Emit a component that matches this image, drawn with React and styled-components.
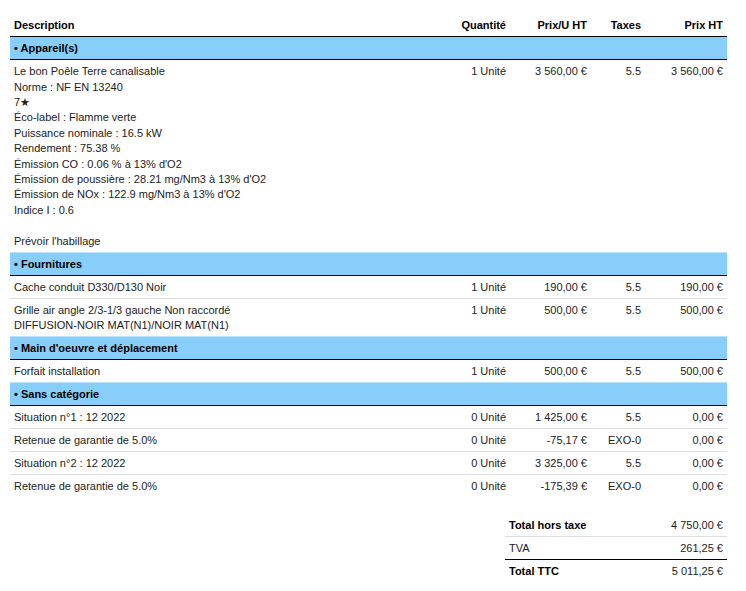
import React from "react";
import styled, { createGlobalStyle } from "styled-components";

const GlobalStyle = createGlobalStyle`
  html, body {
    margin: 0;
    padding: 0;
    background: #fff;
  }
  body {
    font-family: "Liberation Sans", Arial, sans-serif;
    font-size: 11px;
    color: #222;
  }
`;

const Page = styled.div`
  width: 717px;
  padding: 13.5px 0 0 10px;
`;

const Table = styled.table`
  width: 100%;
  border-collapse: collapse;
  table-layout: fixed;
  line-height: 1.4;
`;

const Th = styled.th`
  padding: 4px 4px 3.4px;
  font-weight: bold;
  color: #000;
  text-align: ${(p) => (p.$align === "left" ? "left" : "right")};
  border-bottom: 1px solid #000;
`;

const BandCell = styled.td`
  background: #87cefa;
  padding: 4px 4px 2.6px;
  font-weight: bold;
  color: #000;
  border-top: 1px solid ${(p) => (p.$first ? "#87cefa" : "#b9e2fb")};
  border-bottom: 1px solid #000;
`;

const Row = styled.tr`
  & + & td {
    border-top: 1px solid #ddd;
  }
`;

const Td = styled.td`
  padding: 4px 4px 2.6px;
  vertical-align: top;
  text-align: ${(p) => (p.$align === "left" ? "left" : "right")};
  white-space: ${(p) => (p.$align === "left" ? "normal" : "nowrap")};
`;

const Totals = styled.table`
  width: 222px;
  margin: 16px 0 0 auto;
  border-collapse: collapse;
  line-height: 1.4;
  border-top: 1px solid #000;
`;

const TotalRow = styled.tr`
  td {
    padding: 4px 4px 2.6px;
    font-weight: ${(p) => (p.$bold ? "bold" : "normal")};
    color: ${(p) => (p.$bold ? "#000" : "#222")};
    border-top: 1px solid ${(p) => p.$line || "transparent"};
  }
  td:last-child {
    text-align: right;
    font-weight: normal;
    color: #222;
  }
`;

const sections = [
  {
    title: "Appareil(s)",
    rows: [
      {
        desc: [
          "Le bon Poêle Terre canalisable",
          "Norme : NF EN 13240",
          "7★",
          "Éco-label : Flamme verte",
          "Puissance nominale : 16.5 kW",
          "Rendement : 75.38 %",
          "Émission CO : 0.06 % à 13% d'O2",
          "Émission de poussière : 28.21 mg/Nm3 à 13% d'O2",
          "Émission de NOx : 122.9 mg/Nm3 à 13% d'O2",
          "Indice I : 0.6",
          "",
          "Prévoir l'habillage",
        ],
        qty: "1 Unité",
        pu: "3 560,00 €",
        tax: "5.5",
        total: "3 560,00 €",
      },
    ],
  },
  {
    title: "Fournitures",
    rows: [
      { desc: ["Cache conduit D330/D130 Noir"], qty: "1 Unité", pu: "190,00 €", tax: "5.5", total: "190,00 €" },
      {
        desc: ["Grille air angle 2/3-1/3 gauche Non raccordé", "DIFFUSION-NOIR MAT(N1)/NOIR MAT(N1)"],
        qty: "1 Unité",
        pu: "500,00 €",
        tax: "5.5",
        total: "500,00 €",
      },
    ],
  },
  {
    title: "Main d'oeuvre et déplacement",
    rows: [{ desc: ["Forfait installation"], qty: "1 Unité", pu: "500,00 €", tax: "5.5", total: "500,00 €" }],
  },
  {
    title: "Sans catégorie",
    rows: [
      { desc: ["Situation n°1 : 12 2022"], qty: "0 Unité", pu: "1 425,00 €", tax: "5.5", total: "0,00 €" },
      { desc: ["Retenue de garantie de 5.0%"], qty: "0 Unité", pu: "-75,17 €", tax: "EXO-0", total: "0,00 €" },
      { desc: ["Situation n°2 : 12 2022"], qty: "0 Unité", pu: "3 325,00 €", tax: "5.5", total: "0,00 €" },
      { desc: ["Retenue de garantie de 5.0%"], qty: "0 Unité", pu: "-175,39 €", tax: "EXO-0", total: "0,00 €" },
    ],
  },
];

const Lines = ({ lines }) =>
  lines.map((l, i) => (
    <React.Fragment key={i}>
      {i > 0 && <br />}
      {l}
    </React.Fragment>
  ));

export default function App() {
  return (
    <Page>
      <GlobalStyle />
      <Table>
        <colgroup>
          <col style={{ width: 440 }} />
          <col style={{ width: 60 }} />
          <col style={{ width: 81 }} />
          <col style={{ width: 54 }} />
          <col style={{ width: 82 }} />
        </colgroup>
        <thead>
          <tr>
            <Th $align="left">Description</Th>
            <Th>Quantité</Th>
            <Th>Prix/U HT</Th>
            <Th>Taxes</Th>
            <Th>Prix HT</Th>
          </tr>
        </thead>
        {sections.map((s, si) => (
          <tbody key={s.title}>
            <tr>
              <BandCell colSpan={5} $first={si === 0}>• {s.title}</BandCell>
            </tr>
            {s.rows.map((r, ri) => (
              <Row key={ri}>
                <Td $align="left">
                  <Lines lines={r.desc} />
                </Td>
                <Td>{r.qty}</Td>
                <Td>{r.pu}</Td>
                <Td>{r.tax}</Td>
                <Td>{r.total}</Td>
              </Row>
            ))}
          </tbody>
        ))}
      </Table>
      <Totals>
        <tbody>
          <TotalRow $bold>
            <td>Total hors taxe</td>
            <td>4 750,00 €</td>
          </TotalRow>
          <TotalRow $line="#ddd">
            <td>TVA</td>
            <td>261,25 €</td>
          </TotalRow>
          <TotalRow $bold $line="#000">
            <td>Total TTC</td>
            <td>5 011,25 €</td>
          </TotalRow>
        </tbody>
      </Totals>
    </Page>
  );
}
